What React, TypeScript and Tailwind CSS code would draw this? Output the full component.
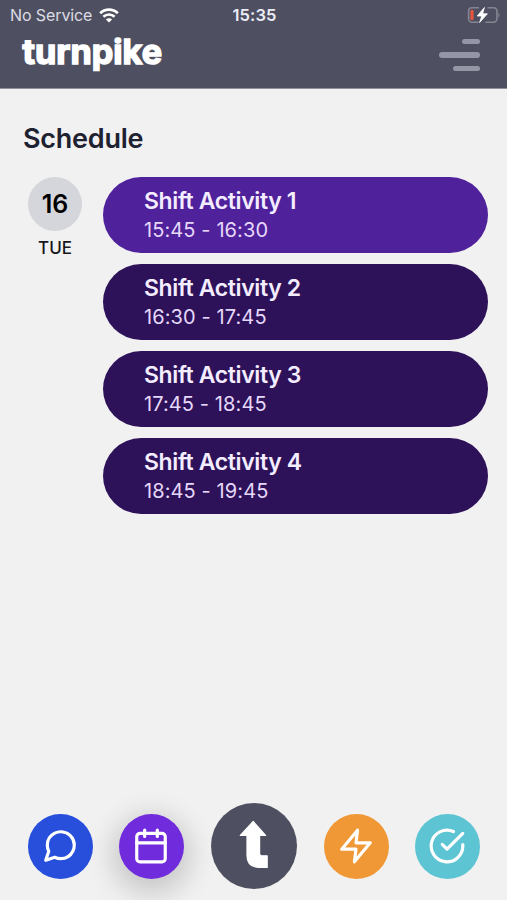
import { ReactNode } from 'react';
import clsx from 'clsx';
import { FiCalendar, FiCheckCircle, FiMessageCircle, FiZap } from 'react-icons/fi';

const activities = [
  { name: 'Shift Activity 1', time: '15:45 - 16:30', active: true },
  { name: 'Shift Activity 2', time: '16:30 - 17:45', active: false },
  { name: 'Shift Activity 3', time: '17:45 - 18:45', active: false },
  { name: 'Shift Activity 4', time: '18:45 - 19:45', active: false },
];

function WifiIcon() {
  return (
    <svg width="20" height="15" viewBox="0 0 20 15" fill="none" stroke="#fff">
      <path d="M1.2 5.2a12.6 12.6 0 0 1 17.6 0" strokeWidth="2.8" />
      <path d="M4.4 8.8a8 8 0 0 1 11.2 0" strokeWidth="2.6" />
      <path d="M10 14.6 6.9 11.5a4.4 4.4 0 0 1 6.2 0z" fill="#fff" stroke="none" />
    </svg>
  );
}

function BatteryIcon() {
  return (
    <svg width="33" height="18" viewBox="0 0 33 18" fill="none">
      <path
        d="M12 1.7H5A3.4 3.4 0 0 0 1.6 5v7.8A3.4 3.4 0 0 0 5 16.2h6.5M20.5 1.7h6A3.4 3.4 0 0 1 29.9 5v7.8a3.4 3.4 0 0 1-3.4 3.4h-8"
        stroke="#858592"
        strokeWidth="1.6"
      />
      <path d="M31.3 6.4c1.5.6 1.5 4.5 0 5.1z" fill="#858592" />
      <rect x="3.4" y="3.9" width="3.2" height="10" rx="1" fill="#e8543c" />
      <path
        d="M17.4 1.5 10.2 10h4.6l-2.2 6.5L20.4 7.800h-4.8z"
        fill="#fff"
        stroke="#fff"
        strokeWidth="0.8"
      />
    </svg>
  );
}

function Logo() {
  return (
    <svg width="144" height="46" viewBox="0 0 144 46" fill="#fff">
      <text
        x="2.500"
        y="32"
        textLength="139.5"
        lengthAdjust="spacingAndGlyphs"
        className="font-['Inter',sans-serif] text-[33.5px] font-bold"
        stroke="#fff"
        strokeWidth="1.5"
      >
        turnpike
      </text>
      <path d="M8.200 8.600 14.600 15.800H1.800z" />
    </svg>
  );
}

function TurnArrow() {
  return (
    <svg width="30" height="50" viewBox="0 0 30 50" fill="#fff">
      <path
        d="M15.2 1.5 27.6 15.5H21.6v18c0 1.6.8 2.3 2.2 2.3H29.2v11.6H21.2C13.4 47.4 9 43 9 35.5V15.5H2.3z"
        stroke="#fff"
        strokeWidth="1.2"
        strokeLinejoin="round"
      />
    </svg>
  );
}

function NavButton({ className, children }: { className: string; children: ReactNode }) {
  return (
    <button
      className={clsx(
        'flex h-[65px] w-[65px] items-center justify-center rounded-full pr-px text-white',
        className
      )}
    >
      {children}
    </button>
  );
}

export default function App() {
  return (
    <div className="flex h-[900px] w-[507px] flex-col overflow-hidden bg-[#f1f1f1] font-['Inter',sans-serif]">
      <header className="h-[89px] border-b border-[#8e8f99] bg-[#4e5061]">
        <div className="grid h-[30px] grid-cols-3 items-center pl-[10px] pr-[7px]">
          <div className="flex items-center gap-[7px]">
            <span className="text-[16px] tracking-[-0.1px] text-[#dcdce4]">No Service</span>
            <WifiIcon />
          </div>
          <span className="pr-px text-center text-[16.5px] font-semibold tracking-[0.1px] text-[#ecebf5]">
            15:35
          </span>
          <div className="flex justify-end">
            <BatteryIcon />
          </div>
        </div>
        <div className="flex h-[50px] items-center justify-between pl-5 pr-[27px]">
          <Logo />
          <button className="flex flex-col items-end gap-2">
            <span className="h-[5.5px] w-[18px] rounded-full bg-[#9496a6]" />
            <span className="h-[5.5px] w-[41px] rounded-full bg-[#9496a6]" />
            <span className="h-[5.5px] w-[27px] rounded-full bg-[#9496a6]" />
          </button>
        </div>
      </header>

      <main className="flex-1 pl-[23px] pr-[19px] pt-8">
        <h1 className="text-[27px] font-semibold leading-9 tracking-[-0.25px] text-[#1e2130]">
          Schedule
        </h1>
        <div className="mt-5 flex">
          <div className="flex w-16 flex-col items-center">
            <div className="flex h-[54px] w-[54px] items-center justify-center rounded-full bg-[#d5d6db] pt-px text-[25px] font-semibold text-black">
              16
            </div>
            <span className="mt-[5px] text-[17px] font-medium leading-6 text-[#17171c]">TUE</span>
          </div>
          <ul className="ml-4 flex flex-1 flex-col gap-[11px]">
            {activities.map((activity) => (
              <li
                key={activity.name}
                className={clsx(
                  'h-[76px] rounded-full pl-[41px] pt-[9px]',
                  activity.active ? 'bg-[#4f219b]' : 'bg-[#2d1259]'
                )}
              >
                <p className="text-[23px] font-semibold leading-[30px] tracking-[-0.38px] text-[#f4ecff]">
                  {activity.name}
                </p>
                <p className="text-[20px] leading-[29px] tracking-[0.1px] text-[#e6d8fa]">
                  {activity.time}
                </p>
              </li>
            ))}
          </ul>
        </div>
      </main>

      <nav className="flex items-center justify-between pb-[11px] pl-7 pr-[27px]">
        <NavButton className="bg-[#274fdc]">
          <FiMessageCircle size={38} />
        </NavButton>
        <NavButton className="-ml-px bg-[#702bdc] shadow-[0_8px_28px_6px_rgba(0,0,0,0.18)]">
          <FiCalendar size={38} />
        </NavButton>
        <button className="flex h-[86px] w-[86px] items-center justify-center rounded-full bg-[#4e5061] pb-[3px] pr-[2px]">
          <TurnArrow />
        </button>
        <NavButton className="-mr-px bg-[#f09835]">
          <FiZap size={38} />
        </NavButton>
        <NavButton className="bg-[#5cc4d2]">
          <FiCheckCircle size={38} />
        </NavButton>
      </nav>
    </div>
  );
}
